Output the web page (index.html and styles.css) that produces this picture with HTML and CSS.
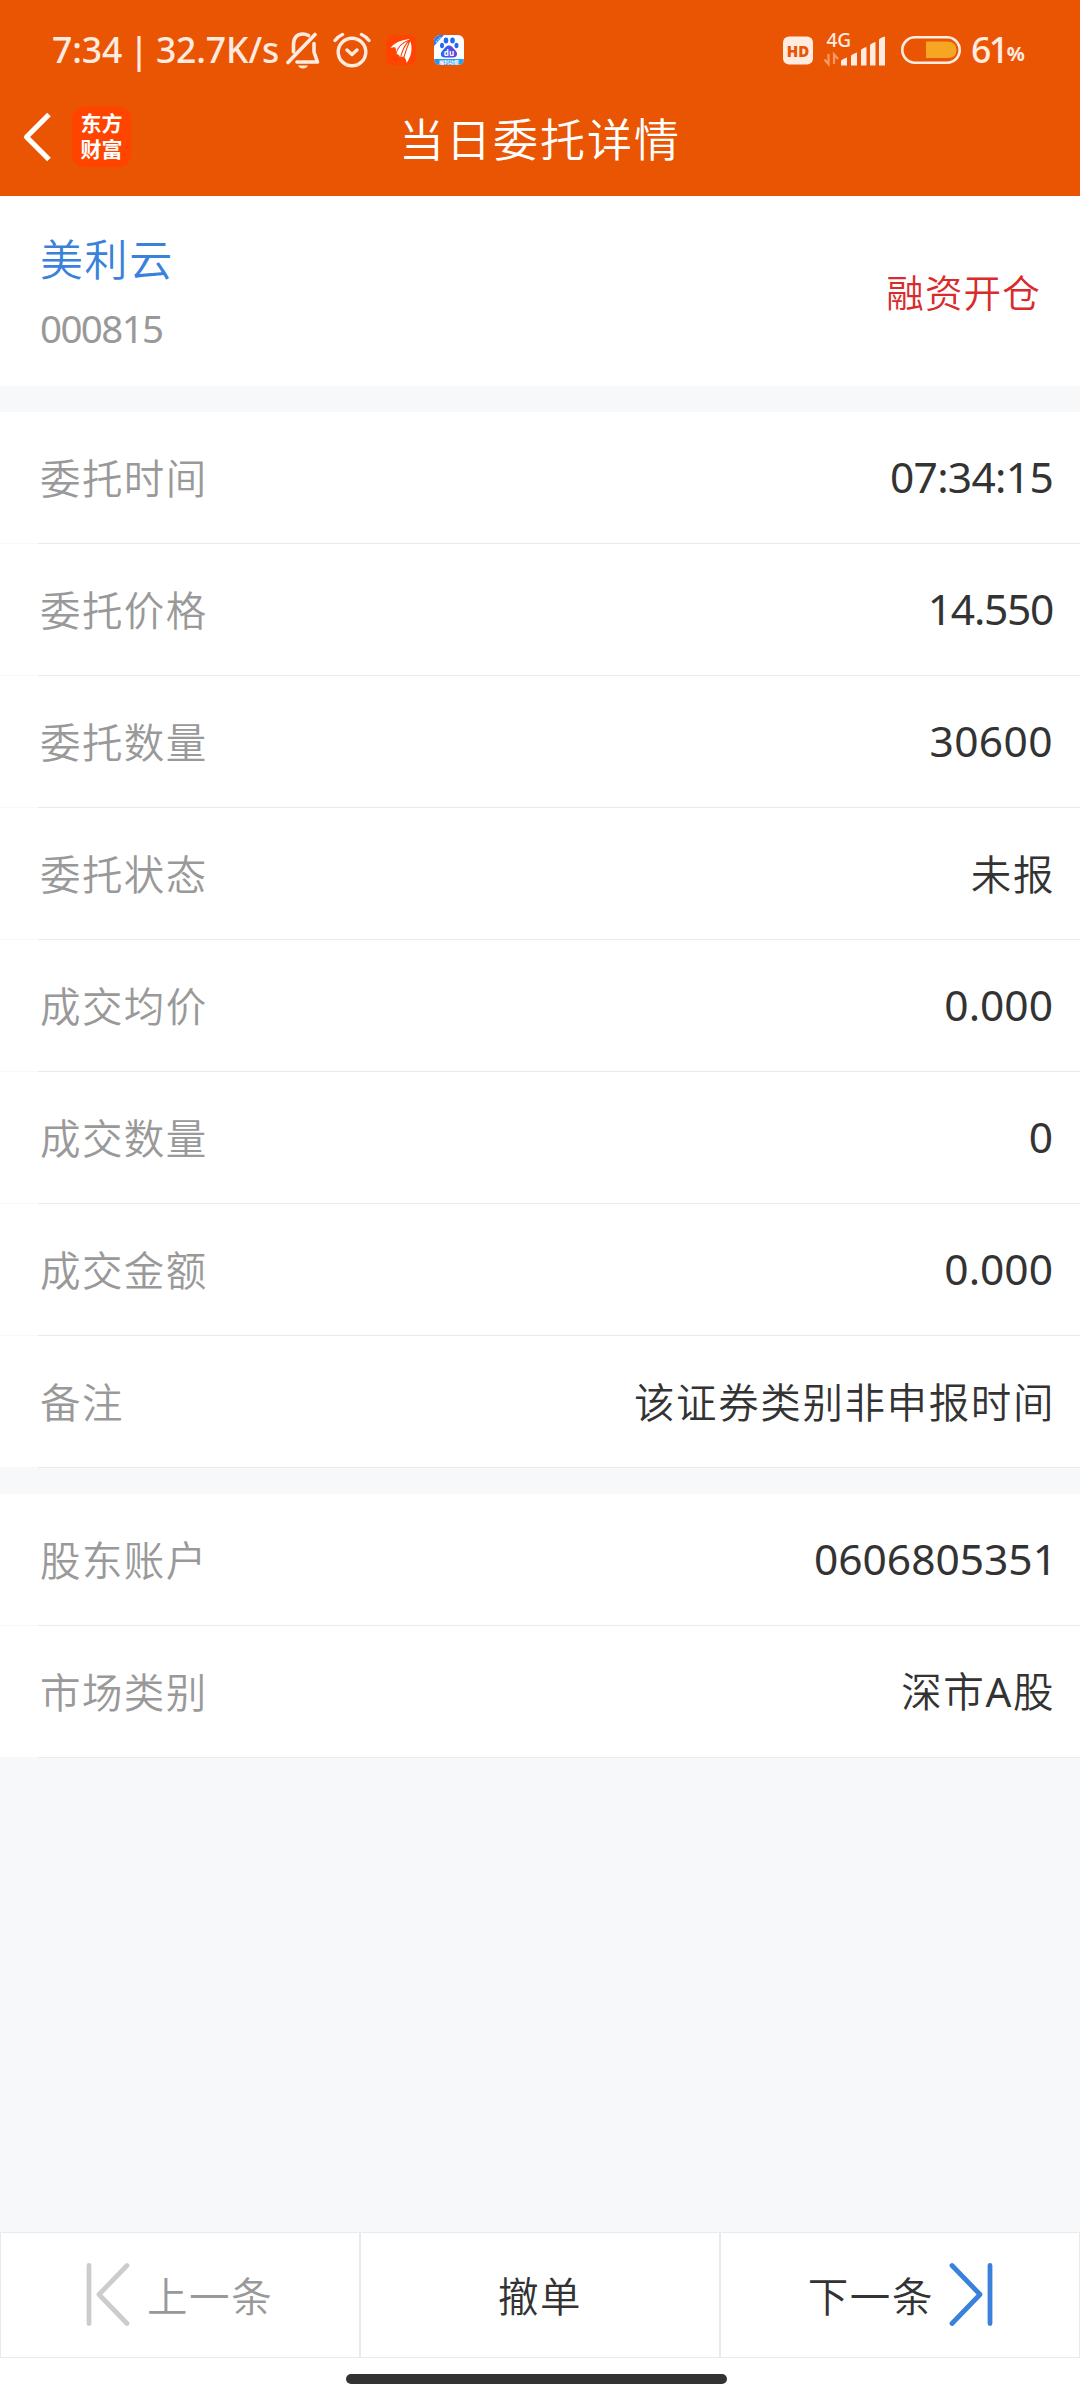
FILE: index.html
```html
<!DOCTYPE html>
<html lang="zh-CN">
<head>
<meta charset="utf-8">
<title>当日委托详情</title>
<link rel="stylesheet" href="styles.css">
</head>
<body>
<header class="header">
  <div class="status">
    <span class="clock">7:34 | 32.7K/s</span>
    <svg class="ic-bell" width="34" height="38" viewBox="0 0 34 38" fill="none" stroke="#ffebe0" stroke-width="3.6" stroke-linecap="round" stroke-linejoin="round">
      <path d="M2 31.500L29 3.500"/><path d="M7.500 21V14C7.500 6.500 11 3 17 3Q20 3 22.500 4.500"/><path d="M28 12.500V21L31.500 31H11"/><path d="M12 34.500h10q-1.500 3-5 3t-5-3z" fill="#ffebe0" stroke="none"/>
    </svg>
    <svg class="ic-alarm" width="38" height="36" viewBox="0 0 38 36" fill="none" stroke="#ffebe0" stroke-width="3.400" stroke-linecap="round" stroke-linejoin="round">
      <circle cx="19" cy="20" r="13.800"/><path d="M2 8.500Q5 4.500 9.500 2.500M36 8.500Q33 4.500 28.500 2.500M14 18l5 4.500 5-4.500"/>
    </svg>
    <svg class="ic-app" width="30" height="30" viewBox="0 0 30 30">
      <rect width="30" height="30" rx="7" fill="#ff4400"/>
      <path d="M4.500 13Q10 5.500 23 4Q25.500 7 25.500 14Q25.500 21 20.500 28Q20.500 24 17.500 21.500L14 22.500Q13.500 19 10 19Q10.500 16 9.500 12.500Q7 12 4.500 13z" fill="#fff"/>
      <path d="M23.500 5Q12 9 10 19M24 5Q17 11 14.500 23M24 5.500Q20.500 13 18 22" fill="none" stroke="#ff4400" stroke-width="1.100"/>
    </svg>
    <svg class="ic-baidu" width="30" height="30" viewBox="0 0 30 30">
      <defs><clipPath id="round"><rect width="30" height="30" rx="6"/></clipPath>
      <linearGradient id="paw" x1="0" x2="1"><stop offset="0" stop-color="#2468f2"/><stop offset="1" stop-color="#6b3fd8"/></linearGradient>
      <linearGradient id="band" x1="0" x2="1"><stop offset="0" stop-color="#2f8cf0"/><stop offset="1" stop-color="#19a8f5"/></linearGradient></defs>
      <g clip-path="url(#round)">
        <rect width="30" height="30" fill="#fff"/>
        <path d="M0 0H10L0 11z" fill="#2f7cf0"/><path d="M2 7l5-5" stroke="#b9d4ff" stroke-width="1.500" stroke-dasharray="1.500 1"/>
        <ellipse cx="12" cy="5.500" rx="2.300" ry="3" fill="#2468f2"/><ellipse cx="18.500" cy="5.500" rx="2.300" ry="3" fill="#2468f2"/>
        <ellipse cx="8" cy="10.500" rx="2" ry="2.800" fill="#2468f2"/><ellipse cx="22.500" cy="10.500" rx="2" ry="2.800" fill="#2468f2"/>
        <path d="M15 10.500c3 0 4 2.500 6 4.500 4 4 1.500 7.500-2 7.500H11c-4 0-6-3.500-2-7.500 2-2 3-4.500 6-4.500z" fill="url(#paw)"/>
        <text x="15" y="21" text-anchor="middle" class="du">du</text>
        <rect y="24" width="30" height="6" fill="url(#band)"/>
        <text x="15" y="29.300" text-anchor="middle" class="band">福利功能</text>
      </g>
    </svg>
    <svg class="ic-net" width="104" height="50" viewBox="782 24 104 50" fill="#ffebe0">
      <rect x="783" y="35.500" width="30" height="28" rx="6"/>
      <text x="798" y="55.500" text-anchor="middle" class="hd">HD</text>
      <text x="826.500" y="46" class="g4">4G</text>
      <path d="M828.500 53v10l-4-4.500M834 63V53.500l4 4.500" fill="none" stroke="#f79a68" stroke-width="2.200"/>
      <path d="M841 60q0-1.500 6-3.500v8h-6zM851 55q0-1.500 6-3.500v13h-6zM861 49.500q0-2 5.500-3.500v18.500H861zM870 44.500q0-2 5.500-3.500v23.500H870zM879 39q0-2 6-3.500v29h-6z"/>
    </svg>
    <svg class="ic-battery" width="60" height="28" viewBox="0 0 60 28">
      <rect x="1.300" y="1.300" width="57.400" height="25.400" rx="12.700" fill="none" stroke="#ffebe0" stroke-width="2.600"/>
      <path d="M25 5.500H47Q55.500 6 55.500 14T47 22H25z" fill="#f5a623"/>
    </svg>
    <span class="pct">61</span><span class="sign">%</span>
  </div>
  <div class="nav">
    <svg class="back" width="30" height="50" viewBox="0 0 30 50" fill="none" stroke="#fff" stroke-width="5.200"><path d="M27 2.500L4.500 25 27 47.500" stroke-linejoin="round"/></svg>
    <div class="logo"><span>东方</span><span>财富</span></div>
    <h1 class="title">当日委托详情</h1>
  </div>
</header>
<section class="stock">
  <div><div class="name">美利云</div><div class="code">000815</div></div>
  <div class="kind">融资开仓</div>
</section>
<section class="rows">
  <div class="row"><span class="label">委托时间</span><span class="num time">07:34:15</span></div>
  <div class="row"><span class="label">委托价格</span><span class="num price">14.550</span></div>
  <div class="row"><span class="label">委托数量</span><span class="num amount">30600</span></div>
  <div class="row"><span class="label">委托状态</span><span class="value">未报</span></div>
  <div class="row"><span class="label">成交均价</span><span class="num">0.000</span></div>
  <div class="row"><span class="label">成交数量</span><span class="num">0</span></div>
  <div class="row"><span class="label">成交金额</span><span class="num">0.000</span></div>
  <div class="row"><span class="label">备注</span><span class="value">该证券类别非申报时间</span></div>
</section>
<section class="rows">
  <div class="row"><span class="label">股东账户</span><span class="num account">0606805351</span></div>
  <div class="row"><span class="label">市场类别</span><span class="value">深市<span class="latin">A</span>股</span></div>
</section>
<footer class="footer">
  <div class="actions">
    <div class="cell prev">
      <svg width="44" height="66" viewBox="0 0 44 66" fill="none" stroke="#ccc" stroke-width="4.800" stroke-linecap="round" stroke-linejoin="round"><path d="M3 3.500V61.500M41 3.500L13 32.500 41 61.500"/></svg>
      <span>上一条</span>
    </div>
    <div class="cell"><span>撤单</span></div>
    <div class="cell next">
      <span>下一条</span>
      <svg width="44" height="66" viewBox="0 0 44 66" fill="none" stroke="#3a81dc" stroke-width="4.800" stroke-linecap="round" stroke-linejoin="round"><path d="M41 3.500V61.500M3 3.500L31 32.500 3 61.500"/></svg>
    </div>
  </div>
  <div class="home"></div>
</footer>
</body>
</html>
```
FILE: styles.css
```css
* { box-sizing: border-box; }
body {
  margin: 0;
  width: 1080px;
  height: 2400px;
  display: flex;
  flex-direction: column;
  background: #f7f8fa;
  color: #333;
  font: 350 40.500px/1 "Noto Sans CJK SC", sans-serif;
  letter-spacing: 1.600px;
  white-space: nowrap;
}
.header { height: 196px; background: #ea5504; color: #fff; }
.status {
  height: 82px;
  padding: 18px 0 0 52px;
  display: flex;
  align-items: center;
  color: #ffebe0;
  font: 500 35.500px/1 "Noto Sans", sans-serif;
  letter-spacing: 0;
}
.clock { width: 234px; word-spacing: -2px; letter-spacing: -.1px; }
.ic-alarm { margin-left: 13px; }
.ic-app { margin-left: 15px; }
.ic-baidu { margin-left: 18px; }
.ic-net { margin-left: 318px; }
.ic-battery { margin-left: 15px; }
.pct { margin-left: 10px; letter-spacing: -2.500px; }
.sign { font-size: 20px; font-weight: 700; padding-top: 7px; }
.du { font: 700 8px "Open Sans", sans-serif; fill: #fff; letter-spacing: 0; }
.band { font: 700 5px "Noto Sans CJK SC", sans-serif; fill: #fff; letter-spacing: 0; }
.hd { font: 800 15px "Open Sans", sans-serif; fill: #ea5504; letter-spacing: 0; }
.g4 { font: 500 19px "Noto Sans", sans-serif; letter-spacing: 0; }
.nav { height: 114px; display: grid; grid-template-columns: 72px 300px 1fr; align-items: center; }
.back { margin: -4px 0 0 22px; }
.logo {
  width: 59px;
  height: 60px;
  margin-top: -4px;
  padding-bottom: 3px;
  border-radius: 12px;
  background: #ff4400;
  display: flex;
  flex-direction: column;
  align-items: center;
  justify-content: center;
  gap: 5px;
  font-size: 21px;
  font-weight: 700;
  letter-spacing: 0;
}
.title { margin: -3px 0 0 27px; font-size: 45px; font-weight: 350; letter-spacing: 2px; }
.stock {
  height: 190px;
  padding: 0 39px 0 40px;
  background: #fff;
  display: flex;
  justify-content: space-between;
  align-items: center;
}
.name { margin-top: 1px; font-size: 43px; color: #3a81dc; }
.code { margin-top: 30px; font: 400 38.500px/1 "Noto Sans", sans-serif; color: #999; letter-spacing: -1.600px; }
.kind { font-size: 37.500px; color: #d92b2b; letter-spacing: 1.200px; }
.rows { margin-top: 26px; background: #fff; }
.row {
  height: 132px;
  padding: 0 27px 0 40px;
  display: flex;
  justify-content: space-between;
  align-items: center;
  border-bottom: 1px solid;
  border-image: linear-gradient(90deg, #f8f8f8 39px, #eaeaea 39px) 1;
}
.label { color: #999; letter-spacing: 1.400px; }
.value { margin-right: -2px; }
.num { font: 400 42.500px/1 "Noto Sans", sans-serif; letter-spacing: 0; }
.time { letter-spacing: -.7px; }
.price { letter-spacing: -1.300px; }
.amount { letter-spacing: .4px; }
.account { margin-right: -4px; }
.latin { font-family: "Noto Sans", sans-serif; font-weight: 400; }
.footer { margin-top: auto; height: 168px; background: #fff; }
.actions { height: 126px; display: grid; grid-template-columns: repeat(3, 1fr); }
.cell { border: 1px solid #eaeaea; display: flex; align-items: center; justify-content: center; }
.cell svg { flex: none; }
.cell span { margin-top: 1px; }
.prev { color: #999; justify-content: flex-start; padding-left: 85px; gap: 17px; }
.next { justify-content: flex-end; padding-right: 86px; gap: 15px; }
.home { width: 381px; height: 10px; margin: 16px 0 0 346px; border-radius: 5px; background: #333; }
```
